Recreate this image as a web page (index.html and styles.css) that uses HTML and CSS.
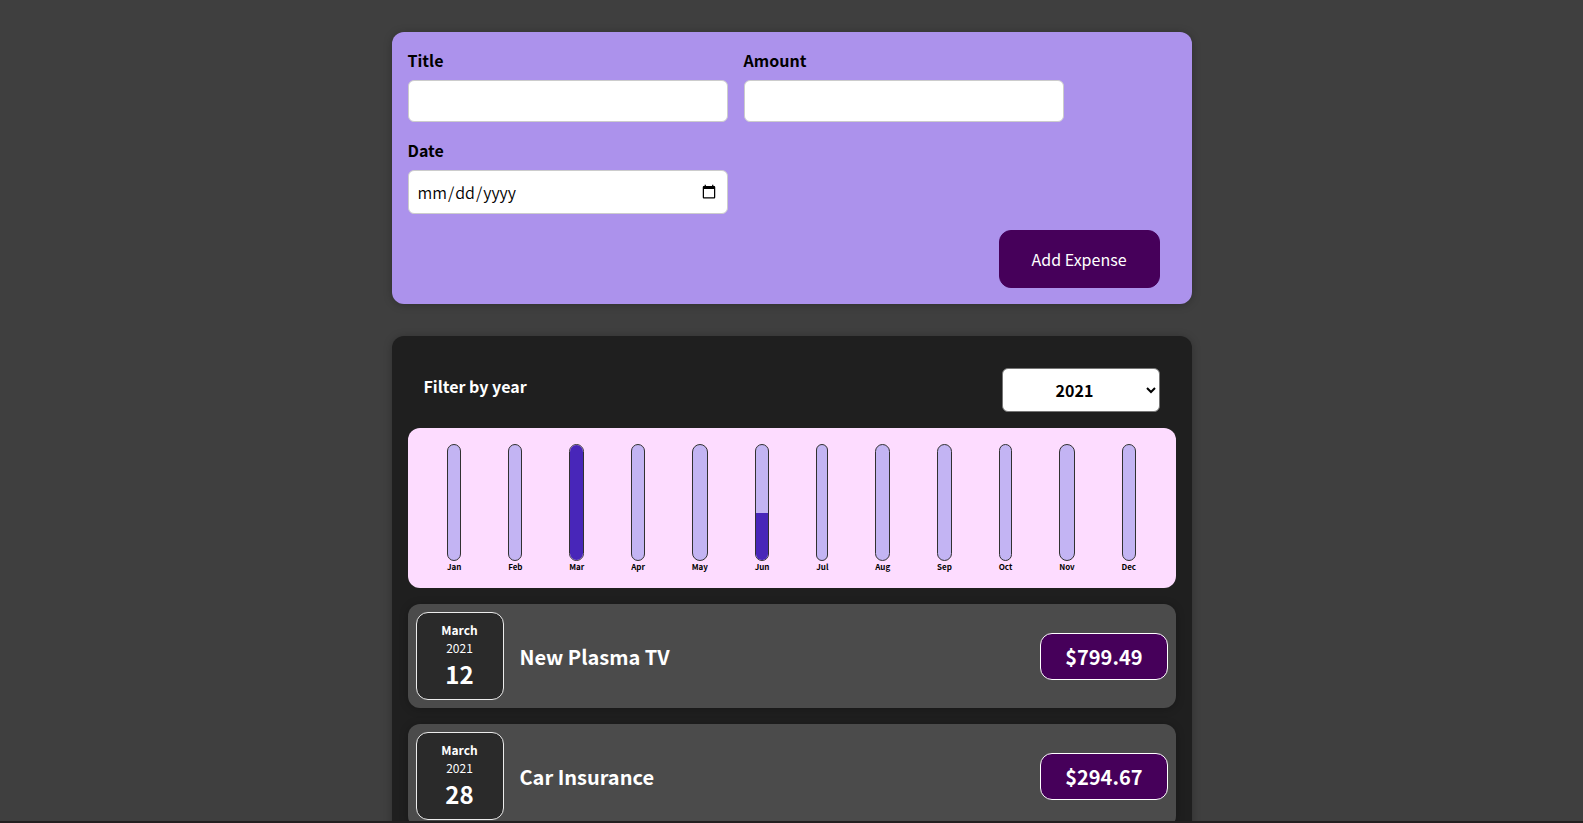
FILE: index.html
```html
<!DOCTYPE html>
<html lang="en">
<head>
<meta charset="utf-8">
<title>Expense Tracker</title>
<link rel="stylesheet" href="styles.css">
</head>
<body>
<main class="page">
  <section class="new-expense">
    <form>
      <div class="controls">
        <div class="control"><label for="title">Title</label><input id="title" type="text"></div>
        <div class="control"><label for="amount">Amount</label><input id="amount" type="number"></div>
        <div class="control"><label for="date">Date</label><input id="date" type="date"></div>
      </div>
      <div class="actions"><button type="submit">Add Expense</button></div>
    </form>
  </section>
  <section class="expenses">
    <div class="filter">
      <label for="year">Filter by year</label>
      <select id="year"><option>2022</option><option selected>2021</option><option>2020</option><option>2019</option></select>
    </div>
    <div class="chart">
      <div class="month"><div class="bar"></div><span>Jan</span></div>
      <div class="month"><div class="bar"></div><span>Feb</span></div>
      <div class="month"><div class="bar"><div class="fill" style="height:100%"></div></div><span>Mar</span></div>
      <div class="month"><div class="bar"></div><span>Apr</span></div>
      <div class="month"><div class="bar"></div><span>May</span></div>
      <div class="month"><div class="bar"><div class="fill" style="height:41%"></div></div><span>Jun</span></div>
      <div class="month"><div class="bar"></div><span>Jul</span></div>
      <div class="month"><div class="bar"></div><span>Aug</span></div>
      <div class="month"><div class="bar"></div><span>Sep</span></div>
      <div class="month"><div class="bar"></div><span>Oct</span></div>
      <div class="month"><div class="bar"></div><span>Nov</span></div>
      <div class="month"><div class="bar"></div><span>Dec</span></div>
    </div>
    <ul class="list">
      <li class="item">
        <div class="date"><div class="date-month">March</div><div class="date-year">2021</div><div class="date-day">12</div></div>
        <h2>New Plasma TV</h2>
        <div class="price">$799.49</div>
      </li>
      <li class="item">
        <div class="date"><div class="date-month">March</div><div class="date-year">2021</div><div class="date-day">28</div></div>
        <h2>Car Insurance</h2>
        <div class="price">$294.67</div>
      </li>
    </ul>
  </section>
</main>
<footer class="strip"></footer>
</body>
</html>
```
FILE: styles.css
```css
* { box-sizing: border-box; }

body {
  margin: 0;
  height: 100vh;
  display: flex;
  flex-direction: column;
  background: #3f3f3f;
  font-family: "Noto Sans CJK JP", "Noto Sans", sans-serif;
  font-size: 16px;
}

input, select, button { font: inherit; }

.page {
  flex: 1;
  min-height: 0;
  overflow: hidden;
}

.strip {
  height: 2px;
  background: #231f20;
}

.new-expense, .expenses {
  width: 800px;
  max-width: 95%;
  margin: 32px auto;
  padding: 16px;
  border-radius: 12px;
  box-shadow: 0 1px 8px rgba(0, 0, 0, 0.25);
}

.new-expense { background: #ac92ec; }

.expenses { background: #1f1f1f; }

.controls {
  display: flex;
  flex-wrap: wrap;
  gap: 16px;
  margin-bottom: 16px;
}

.control label {
  display: block;
  margin-bottom: 8px;
  line-height: 24px;
  font-weight: 700;
}

.control input {
  display: block;
  width: 320px;
  max-width: 100%;
  height: 42px;
  padding: 8px;
  border: 1px solid #ccc;
  border-radius: 6px;
  background: #fff;
  font-weight: 350;
}

.control input[type="date"] { height: 44px; }

.actions {
  padding-right: 16px;
  text-align: right;
}

.actions button {
  padding: 16px 32px;
  border: 1px solid #46005a;
  border-radius: 12px;
  background: #46005a;
  color: #fff;
  line-height: 24px;
  vertical-align: top;
}

.filter {
  display: flex;
  justify-content: space-between;
  padding: 16px;
  color: #fff;
  line-height: 36px;
  font-weight: 700;
}

.filter select {
  width: 158px;
  height: 44px;
  border: 1px solid #767676;
  border-radius: 6px;
  background: #fff;
  color: #000;
  text-align: center;
  line-height: 24px;
}

.chart {
  display: flex;
  justify-content: space-around;
  height: 160px;
  padding: 16px;
  border-radius: 12px;
  background: #fddcff;
}

.month {
  display: flex;
  flex-direction: column;
  align-items: center;
  font-size: 8px;
  line-height: 11px;
  font-weight: 700;
}

.bar {
  display: flex;
  flex-direction: column;
  justify-content: flex-end;
  flex: 1;
  width: 100%;
  overflow: hidden;
  border: 1px solid #313131;
  border-radius: 12px;
  background: #c3b4f3;
}

.fill { background: #4826b9; }

.list {
  margin: 0;
  padding: 0;
  list-style: none;
}

.item {
  display: flex;
  align-items: center;
  gap: 16px;
  margin: 16px 0;
  padding: 8px;
  border-radius: 12px;
  background: #4b4b4b;
  color: #fff;
  box-shadow: 0 1px 8px rgba(0, 0, 0, 0.25);
}

.date {
  display: flex;
  flex-direction: column;
  align-items: center;
  justify-content: center;
  width: 88px;
  height: 88px;
  border: 1px solid #ececec;
  border-radius: 12px;
  background: #2a2a2a;
}

.date-month {
  font-size: 12px;
  line-height: 18px;
  font-weight: 700;
}

.date-year {
  font-size: 12px;
  line-height: 17px;
}

.date-day {
  font-size: 24px;
  line-height: 35px;
  font-weight: 700;
}

.item h2 {
  flex: 1;
  margin: 0;
  font-size: 20px;
}

.price {
  padding: 8px 24px;
  border: 1px solid #fff;
  border-radius: 12px;
  background: #46005a;
  font-size: 20px;
  line-height: 29px;
  font-weight: 700;
}
```
